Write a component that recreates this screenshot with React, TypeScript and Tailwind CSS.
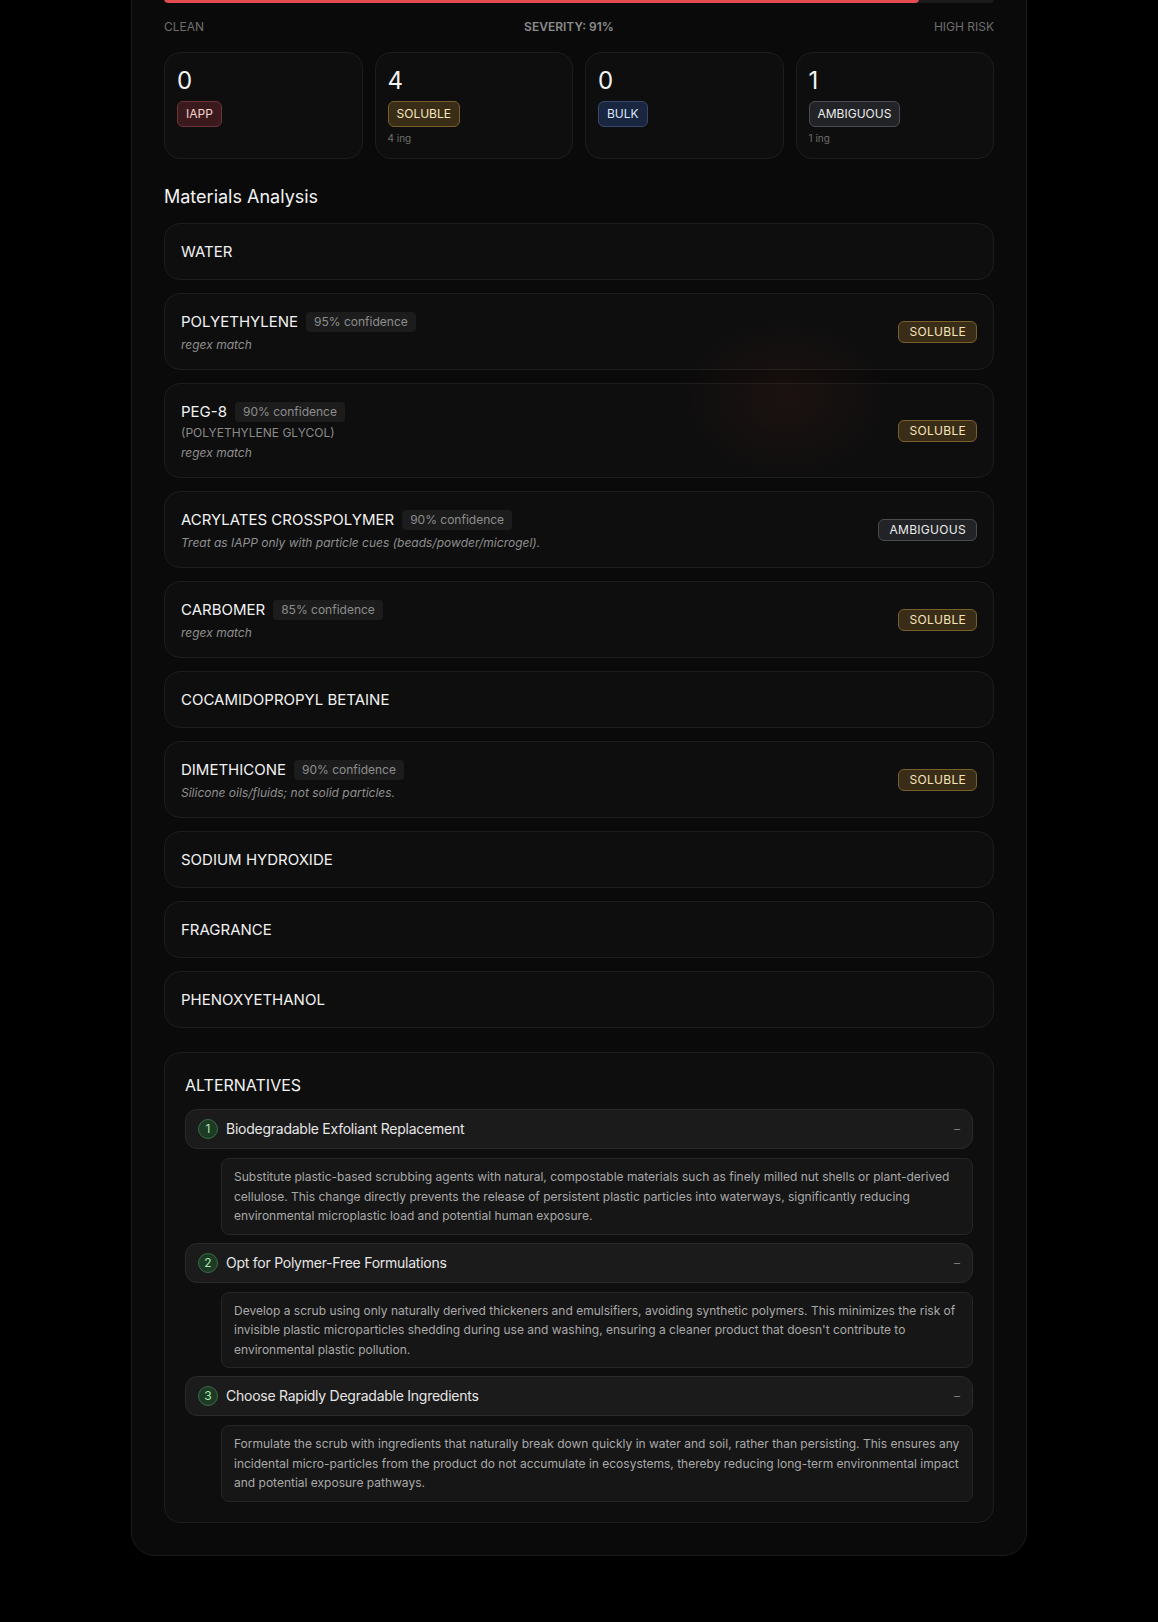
import React from "react";

type Kind = "iapp" | "soluble" | "bulk" | "ambiguous";

const badgeStyles: Record<Kind, string> = {
  iapp: "bg-[#3a1a1d] border-[#6e3439] text-[#f4d0d0]",
  soluble: "bg-[#3a2d17] border-[#7a5f2b] text-[#f7e6bc]",
  bulk: "bg-[#1a2540] border-[#35496e] text-[#dbe6ff]",
  ambiguous: "bg-[#222326] border-[#4b4c51] text-[#ececec]",
};

const labels: Record<Kind, string> = {
  iapp: "IAPP",
  soluble: "SOLUBLE",
  bulk: "BULK",
  ambiguous: "AMBIGUOUS",
};

function StatCard({ n, kind, sub }: { n: number; kind: Kind; sub?: string }) {
  return (
    <div className="rounded-2xl border border-[#1d1d1d] bg-[#0e0e0e] p-3">
      <div className="text-2xl leading-8 text-[#f2f2f2]">{n}</div>
      <div className="mt-1 flex">
        <span className={"rounded-md border px-2 py-1 text-xs leading-4 " + badgeStyles[kind]}>{labels[kind]}</span>
      </div>
      {sub && <div className="mt-1 text-[10px] leading-[15px] text-[#6f6f6f]">{sub}</div>}
    </div>
  );
}

type Item = {
  name: string;
  conf?: string;
  sub?: string;
  note?: string;
  kind?: Kind;
};

const items: Item[] = [
  { name: "WATER" },
  { name: "POLYETHYLENE", conf: "95% confidence", note: "regex match", kind: "soluble" },
  { name: "PEG-8", conf: "90% confidence", sub: "(POLYETHYLENE GLYCOL)", note: "regex match", kind: "soluble" },
  {
    name: "ACRYLATES CROSSPOLYMER",
    conf: "90% confidence",
    note: "Treat as IAPP only with particle cues (beads/powder/microgel).",
    kind: "ambiguous",
  },
  { name: "CARBOMER", conf: "85% confidence", note: "regex match", kind: "soluble" },
  { name: "COCAMIDOPROPYL BETAINE" },
  { name: "DIMETHICONE", conf: "90% confidence", note: "Silicone oils/fluids; not solid particles.", kind: "soluble" },
  { name: "SODIUM HYDROXIDE" },
  { name: "FRAGRANCE" },
  { name: "PHENOXYETHANOL" },
];

function MaterialCard({ item }: { item: Item }) {
  return (
    <div className="flex items-center justify-between rounded-2xl border border-[#1d1d1d] bg-[#0e0e0e] p-4">
      <div className="min-w-0">
        <div className="flex items-center gap-2">
          <span className="text-[15px] leading-[23px] text-[#f2f2f2]">{item.name}</span>
          {item.conf && (
            <span className="rounded bg-[#1c1c1c] px-2 py-0.5 text-xs leading-4 text-[#8d8d8d]">{item.conf}</span>
          )}
        </div>
        {item.sub && <div className="mt-0.5 text-xs leading-4 text-[#8a8a8a]">{item.sub}</div>}
        {item.note && <div className="mt-1 text-xs italic leading-4 text-[#8f8f8f]">{item.note}</div>}
      </div>
      {item.kind && (
        <span
          className={
            "shrink-0 rounded-md border px-2.5 py-0.5 text-xs leading-4 tracking-wide " + badgeStyles[item.kind]
          }
        >
          {labels[item.kind]}
        </span>
      )}
    </div>
  );
}

const alternatives = [
  {
    title: "Biodegradable Exfoliant Replacement",
    body: "Substitute plastic-based scrubbing agents with natural, compostable materials such as finely milled nut shells or plant-derived cellulose. This change directly prevents the release of persistent plastic particles into waterways, significantly reducing environmental microplastic load and potential human exposure.",
  },
  {
    title: "Opt for Polymer-Free Formulations",
    body: "Develop a scrub using only naturally derived thickeners and emulsifiers, avoiding synthetic polymers. This minimizes the risk of invisible plastic microparticles shedding during use and washing, ensuring a cleaner product that doesn't contribute to environmental plastic pollution.",
  },
  {
    title: "Choose Rapidly Degradable Ingredients",
    body: "Formulate the scrub with ingredients that naturally break down quickly in water and soil, rather than persisting. This ensures any incidental micro-particles from the product do not accumulate in ecosystems, thereby reducing long-term environmental impact and potential exposure pathways.",
  },
];

export default function App() {
  return (
    <div className="min-h-screen overflow-hidden bg-black font-['Inter','Noto_Sans',sans-serif] antialiased">
      <div className="relative mx-auto -mt-[38px] mb-[67px] max-w-4xl rounded-3xl border border-[#1c1c1c] bg-[#0a0a0a] p-8">
        <div className="pointer-events-none absolute left-[544px] top-[350px] h-[170px] w-[220px] bg-[radial-gradient(ellipse_at_center,rgba(200,70,50,0.07),transparent_70%)]" />
        <div className="h-2 overflow-hidden rounded-full bg-[#1a1a1a]">
          <div className="h-full w-[91%] rounded-full bg-[#e34b4f]" />
        </div>
        <div className="mt-4 flex items-center justify-between text-xs leading-4 text-[#6e6e6e]">
          <span>CLEAN</span>
          <span className="font-semibold text-[#8c8c8c]">SEVERITY: 91%</span>
          <span>HIGH RISK</span>
        </div>
        <div className="mt-[17px] grid grid-cols-4 gap-3">
          <StatCard n={0} kind="iapp" />
          <StatCard n={4} kind="soluble" sub="4 ing" />
          <StatCard n={0} kind="bulk" />
          <StatCard n={1} kind="ambiguous" sub="1 ing" />
        </div>

        <h2 className="mt-6 mb-3 text-lg leading-7 text-[#f2f2f2]">Materials Analysis</h2>
        <div className="flex flex-col gap-[13px]">
          {items.map((it) => (
            <MaterialCard key={it.name} item={it} />
          ))}
        </div>

        <div className="mt-6 rounded-2xl border border-[#1d1d1d] bg-[#0e0e0e] p-5">
          <div className="mb-3 text-base leading-6 text-[#f2f2f2]">ALTERNATIVES</div>
          <div className="flex flex-col gap-2">
            {alternatives.map((a, i) => (
              <div key={a.title} className="flex flex-col gap-[9px]">
                <div className="flex items-center justify-between rounded-xl border border-[#2a2a2a] bg-[#1b1b1b] px-3 py-2">
                  <div className="flex items-center gap-2">
                    <span className="flex h-5 w-5 items-center justify-center rounded-full border border-[#3b6b46] bg-[#1d3a25] text-xs leading-4 text-[#a6e8b0]">
                      {i + 1}
                    </span>
                    <span className="text-sm leading-[22px] tracking-[-0.018em] text-[#e6e6e6]">{a.title}</span>
                  </div>
                  <span className="text-xs leading-4 text-[#7a7a7a]">–</span>
                </div>
                <div className="ml-9 rounded-lg border border-[#262626] bg-[#161616] px-3 py-2 text-xs leading-[19.5px] text-[#a9a9a9]">
                  {a.body}
                </div>
              </div>
            ))}
          </div>
        </div>
      </div>
    </div>
  );
}
